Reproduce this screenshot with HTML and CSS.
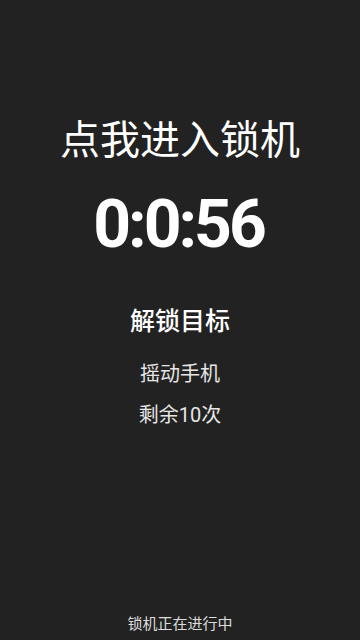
FILE: index.html
```html
<!DOCTYPE html>
<html lang="zh-CN">
<head>
  <meta charset="UTF-8">
  <meta name="viewport" content="width=device-width, initial-scale=1.0">
  <title>锁机</title>
  <link rel="stylesheet" href="styles.css">
</head>
<body>
  <div class="screen">
    <div class="main">
      <h1 class="enter">点我进入锁机</h1>
      <div class="timer">0:0:56</div>
      <h2 class="goal-title">解锁目标</h2>
      <p class="goal first">摇动手机</p>
      <p class="goal">剩余10次</p>
    </div>
    <div class="status">锁机正在进行中</div>
  </div>
</body>
</html>
```

FILE: styles.css
```css
body {
  margin: 0;
  background-color: #222222;
  font-family: Roboto, "Noto Sans CJK SC", sans-serif;
  color: #fff;
  text-align: center;
}
.screen {
  height: 640px;
  display: flex;
  flex-direction: column;
}
.main {
  flex: 1;
  padding-top: 115px;
}
.enter {
  margin: 0;
  font-size: 40px;
  font-weight: 400;
  line-height: 52px;
}
.timer {
  margin-top: 20px;
  font-size: 66px;
  font-weight: bold;
  line-height: 76px;
  letter-spacing: -3px;
  text-indent: -3px;
}
.goal-title {
  margin: 43px 0 0;
  font-size: 25px;
  font-weight: 500;
  line-height: 32px;
}
.goal {
  margin: 15px 0 0;
  font-size: 20px;
  line-height: 26px;
  color: #e6e6e6;
}
.goal.first {
  margin-top: 23px;
}
.status {
  font-size: 15px;
  line-height: 20px;
  padding-bottom: 6px;
  color: #dddddd;
}
```
